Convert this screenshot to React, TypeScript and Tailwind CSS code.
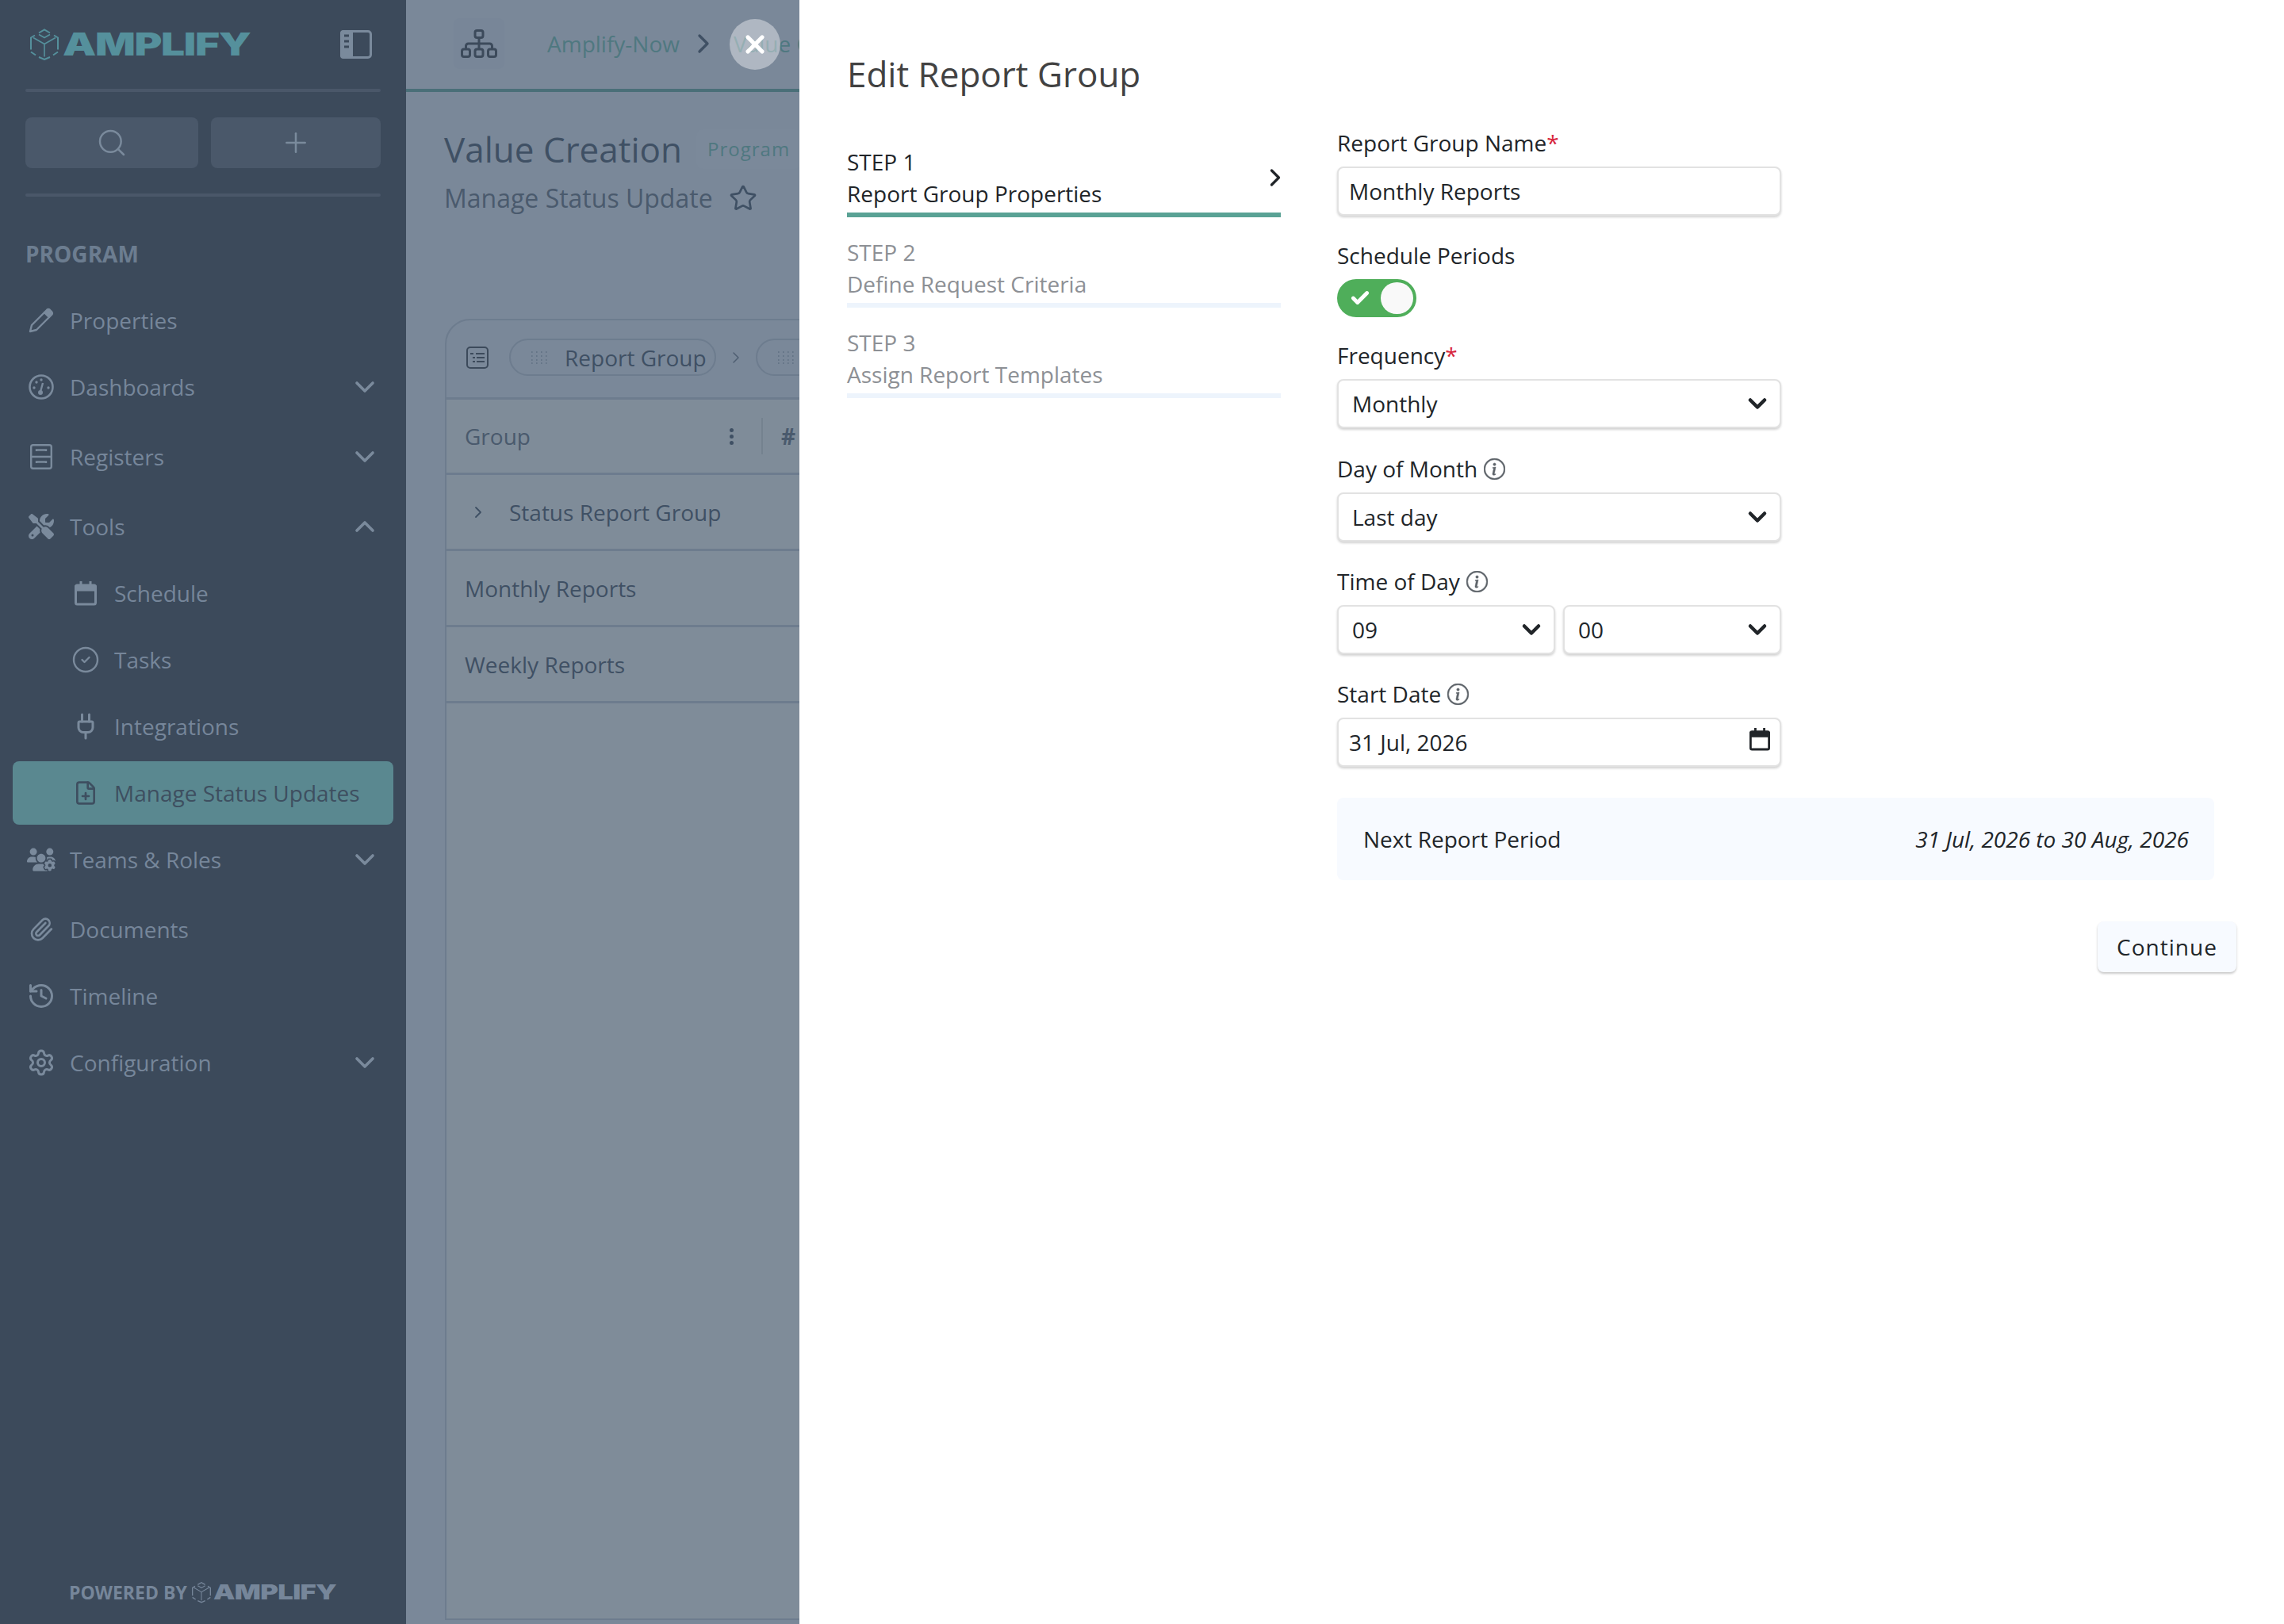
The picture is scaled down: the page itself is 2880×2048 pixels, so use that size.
import { ReactNode } from "react";
import {
  Search,
  Plus,
  ChevronDown,
  ChevronUp,
  ChevronRight,
  CircleCheck,
  Plug,
  FilePlus,
  Paperclip,
  History,
  Settings,
  Star,
  X,
  Check,
} from "lucide-react";
import { FaScrewdriverWrench, FaUsersGear } from "react-icons/fa6";
import { BsInfoCircle } from "react-icons/bs";

function Cube({ className }: { className: string }) {
  return (
    <svg viewBox="0 0 36 40" fill="none" stroke="currentColor" strokeWidth="2" className={className}>
      <path d="M11 5.500 18 1.500l7 4M30 8.500l5 3v15M1 26.500v-15l5-3M1 29.500l6 4M29 33.500l6-4M11 36l7 3 7-3" />
      <path d="M4 11.500l14 8 14-8M18 19.500v16M11 7.500l7 4 7-4" strokeWidth="1.600" />
    </svg>
  );
}

function PanelIcon() {
  return (
    <svg viewBox="0 0 40 36" className="w-10 h-9">
      <rect x="1.500" y="1.500" width="37" height="33" rx="3.500" fill="none" stroke="#7a8a9c" strokeWidth="3" />
      <path d="M4 0h12v36H4a4 4 0 0 1-4-4V4a4 4 0 0 1 4-4z" fill="#7a8a9c" />
      <path d="M5 7h6M5 14h6M5 21h6" stroke="#3c4a5b" strokeWidth="3" />
    </svg>
  );
}

function PenIcon() {
  return (
    <svg viewBox="0 0 32 32" className="w-8 h-8" fill="none" stroke="currentColor" strokeWidth="2.400" strokeLinejoin="round">
      <path d="M2 30l2-8L20 6l6 6-16 16z" />
      <path d="M20 6l3-3a3 3 0 0 1 4 0l2 2a3 3 0 0 1 0 4l-3 3z" fill="currentColor" />
    </svg>
  );
}

function GaugeIcon() {
  return (
    <svg viewBox="0 0 32 32" className="w-8 h-8" fill="none" stroke="currentColor">
      <circle cx="16" cy="16" r="14.500" strokeWidth="2.600" />
      <path d="M15 22l3-11" strokeWidth="2.400" />
      <circle cx="15" cy="23" r="3" fill="currentColor" stroke="none" />
      <circle cx="7" cy="17" r="1.700" fill="currentColor" stroke="none" />
      <circle cx="10" cy="10" r="1.700" fill="currentColor" stroke="none" />
      <circle cx="16" cy="7" r="1.700" fill="currentColor" stroke="none" />
      <circle cx="25" cy="17" r="1.700" fill="currentColor" stroke="none" />
    </svg>
  );
}

function CabinetIcon() {
  return (
    <svg viewBox="0 0 28 32" className="w-7 h-8" fill="none" stroke="currentColor" strokeWidth="2.400">
      <rect x="1.200" y="1.200" width="25.600" height="29.600" rx="2.500" />
      <path d="M1 16h26M8 9V7.500h12V9M8 24v-1.500h12V24" />
    </svg>
  );
}

function CalendarIcon({ className }: { className: string }) {
  return (
    <svg viewBox="0 0 28 32" className={className} fill="none" stroke="currentColor" strokeWidth="3">
      <rect x="1.500" y="6" width="25" height="24" rx="2" />
      <path d="M1 8h26v4H1z" fill="currentColor" />
      <path d="M8 1v6M20 1v6" />
    </svg>
  );
}

function SitemapIcon() {
  return (
    <svg viewBox="0 0 46 36" className="w-[46px] h-9" fill="none" stroke="#3c4a5b" strokeWidth="3">
      <rect x="18" y="1.500" width="10" height="9" rx="2.500" />
      <rect x="1.500" y="25" width="10" height="9.500" rx="2.500" />
      <rect x="18" y="25" width="10" height="9.500" rx="2.500" />
      <rect x="34.500" y="25" width="10" height="9.500" rx="2.500" />
      <path d="M23 11v14M6.500 25v-4a3 3 0 0 1 3-3h27a3 3 0 0 1 3 3v4" />
    </svg>
  );
}

function ListBoxIcon() {
  return (
    <svg viewBox="0 0 28 28" className="w-7 h-7" fill="none" stroke="#3c4a5b" strokeWidth="2">
      <rect x="1" y="1" width="26" height="26" rx="4" />
      <path d="M5 9h4M12 9h11M8 14h3M13 14h10M8 19h3M13 19h10" strokeWidth="1.800" />
    </svg>
  );
}

function DragDots() {
  return (
    <svg viewBox="0 0 22 16" className="w-[22px] h-4" fill="#647487">
      {[0, 6, 12, 18].map((x) =>
        [0, 5, 10, 14].map((y) => <rect key={`${x}-${y}`} x={x} y={y} width="1.600" height="2" />)
      )}
    </svg>
  );
}

type NavItem = {
  label: string;
  icon: ReactNode;
  chevron?: "up" | "down";
  sub?: boolean;
  active?: boolean;
  spaced?: boolean;
};

const navItems: NavItem[] = [
  { label: "Properties", icon: <PenIcon /> },
  { label: "Dashboards", icon: <GaugeIcon />, chevron: "down" },
  { label: "Registers", icon: <CabinetIcon />, chevron: "down", spaced: true },
  { label: "Tools", icon: <FaScrewdriverWrench className="w-8 h-8" />, chevron: "up", spaced: true },
  { label: "Schedule", icon: <CalendarIcon className="w-7 h-8" />, sub: true },
  { label: "Tasks", icon: <CircleCheck className="w-9 h-9" strokeWidth={1.6} />, sub: true },
  { label: "Integrations", icon: <Plug className="w-9 h-9" strokeWidth={2} />, sub: true },
  { label: "Manage Status Updates", icon: <FilePlus className="w-8 h-8" strokeWidth={2} />, sub: true, active: true },
  { label: "Teams & Roles", icon: <FaUsersGear className="w-10 h-10" />, chevron: "down" },
  { label: "Documents", icon: <Paperclip className="w-8 h-8" strokeWidth={2} />, spaced: true },
  { label: "Timeline", icon: <History className="w-9 h-9" strokeWidth={2} /> },
  { label: "Configuration", icon: <Settings className="w-9 h-9" strokeWidth={2} />, chevron: "down" },
];

function NavRow({ item }: { item: NavItem }) {
  return (
    <div className={`h-[84px] py-[2px] px-4 ${item.spaced ? "mt-1" : ""}`}>
      <div
        className={`h-20 flex items-center rounded-lg ${item.sub ? "pl-[74px]" : "pl-[18px]"} ${
          item.active ? "bg-[#5a8890] text-[#3e4f60]" : "text-[#76869a]"
        }`}
      >
        <span className={`w-9 flex items-center justify-center shrink-0 ${item.active ? "text-[#3e4f60]" : "text-[#7a8a9c]"}`}>
          {item.icon}
        </span>
        <span className="ml-[18px] text-[28px] leading-10">{item.label}</span>
        {item.chevron === "down" && <ChevronDown className="ml-auto mr-[16px] w-10 h-10 text-[#7a8a9c]" strokeWidth={2.200} />}
        {item.chevron === "up" && <ChevronUp className="ml-auto mr-[16px] w-10 h-10 text-[#7a8a9c]" strokeWidth={2.200} />}
      </div>
    </div>
  );
}

function Sidebar() {
  return (
    <aside className="w-[512px] h-full shrink-0 bg-[#3c4a5b] flex flex-col">
      <div className="h-[112px] flex items-center px-[38px]">
        <Cube className="w-[36px] h-[40px] text-[#55909c] shrink-0" />
        <span className="ml-[5px] font-['Inter',sans-serif] font-black text-[40px] leading-none tracking-[-1px] text-[#55909c] scale-x-[1.33] origin-left">
          AMPLIFY
        </span>
        <span className="ml-auto mr-[5px]">
          <PanelIcon />
        </span>
      </div>
      <div className="mx-8 h-1 rounded bg-[#4a5769]" />
      <div className="mx-8 mt-8 flex gap-4">
        <button className="w-[218px] h-16 rounded-lg bg-[#4a586a] flex items-center justify-center text-[#7a8a9c]">
          <Search className="w-10 h-10" strokeWidth={1.500} />
        </button>
        <button className="w-[214px] h-16 rounded-lg bg-[#4a586a] flex items-center justify-center text-[#7a8a9c]">
          <Plus className="w-10 h-10" strokeWidth={1.500} />
        </button>
      </div>
      <div className="mx-8 mt-8 h-1 rounded bg-[#4a5769]" />
      <div className="mx-8 mt-[52px] h-10 flex items-center font-bold text-[28px] text-[#6c7d90]">PROGRAM</div>
      <nav className="mt-[22px]">
        {navItems.map((item) => (
          <NavRow key={item.label} item={item} />
        ))}
      </nav>
      <div className="mt-auto mb-[24px] ml-[87px] flex items-center text-[#76869a]">
        <span className="font-bold text-[23px] leading-8 w-[155px] whitespace-nowrap">POWERED BY</span>
        <Cube className="w-[24px] h-[28px]" />
        <span className="ml-[3px] font-['Inter',sans-serif] font-black text-[26px] leading-none tracking-[-0.5px] scale-x-[1.33] origin-left">
          AMPLIFY
        </span>
      </div>
    </aside>
  );
}

function Rows() {
  return (
    <>
      <div className="h-[96px] flex items-center border-b-[3px] border-[#6d7c8e] pl-[29px]">
        <ChevronRight className="w-6 h-6 -ml-[1px] text-[#3f5064]" strokeWidth={1.800} />
        <span className="ml-[27px] text-[28px] text-[#3f5064]">Status Report Group</span>
      </div>
      <div className="h-[96px] flex items-center border-b-[3px] border-[#6d7c8e] pl-[23px] text-[28px] text-[#3f5064]">Monthly Reports</div>
      <div className="h-[96px] flex items-center border-b-[3px] border-[#6d7c8e] pl-[23px] text-[28px] text-[#3f5064]">Weekly Reports</div>
    </>
  );
}

function MainBehind() {
  return (
    <main className="flex-1 min-w-0 h-full bg-[#7a8899] flex flex-col">
      <header className="h-[116px] shrink-0 border-b-4 border-[#4a6f78] flex items-center pb-[2px]">
        <div className="ml-[60px] w-16 h-16 flex items-center justify-center rounded-lg bg-[#788698]">
          <SitemapIcon />
        </div>
        <span className="ml-[54px] text-[28px] text-[#4f7880]">Amplify-Now</span>
        <ChevronRight className="ml-[10px] w-10 h-10 text-[#3f5064]" strokeWidth={2} />
        <span className="ml-[18px] text-[28px] text-[#4f7880]">Value Creation</span>
      </header>
      <div className="ml-[48px] mt-[46px] flex items-center h-[52px]">
        <span className="text-[44px] leading-[52px] text-[#3f5064]">Value Creation</span>
        <span className="ml-[18px] h-[50px] px-[14px] flex items-center rounded-lg bg-[#7b899a] text-[24px] tracking-[1px] text-[#4f7880]">Program</span>
      </div>
      <div className="ml-[48px] mt-[16px] flex items-center h-10">
        <span className="text-[32px] leading-10 text-[#4a5a6d]">Manage Status Update</span>
        <Star className="ml-[20px] w-9 h-9 text-[#3f5064]" strokeWidth={1.800} />
      </div>
      <section className="ml-[49px] mr-8 mt-[132px] mb-[5px] flex-1 rounded-t-[32px] border-2 border-[#6d7c8e] flex flex-col">
        <div className="h-[100px] shrink-0 flex items-center pl-[25px] border-b-[3px] border-[#6d7c8e] pb-[4px]">
          <ListBoxIcon />
          <div className="ml-[26px] w-[261px] h-[47px] rounded-full border-2 border-[#6d7c8e] flex items-center pl-[26px]">
            <DragDots />
            <span className="ml-[20px] text-[28px] text-[#3f5064]">Report Group</span>
          </div>
          <ChevronRight className="ml-[13px] w-6 h-6 text-[#4f5f72]" strokeWidth={1.500} />
          <div className="ml-[13px] w-[261px] h-[47px] rounded-full border-2 border-[#6d7c8e] flex items-center pl-[26px]">
            <DragDots />
          </div>
        </div>
        <div className="flex-1 bg-[#7f8c99] flex flex-col">
          <div className="h-[95px] flex items-center border-b-[3px] border-[#6d7c8e] pl-[23px] text-[28px] text-[#4a5a6d]">
            <span className="w-[334px]">Group</span>
            <span className="flex flex-col gap-[3px] w-[40px]">
              <i className="w-[5px] h-[5px] rounded-full bg-[#3f5064]" />
              <i className="w-[5px] h-[5px] rounded-full bg-[#3f5064]" />
              <i className="w-[5px] h-[5px] rounded-full bg-[#3f5064]" />
            </span>
            <span className="w-[2px] h-[46px] bg-[#74828f]" />
            <span className="ml-[23px] font-bold">#</span>
          </div>
          <Rows />
        </div>
      </section>
    </main>
  );
}

function Step({ step, name, active }: { step: string; name: string; active?: boolean }) {
  return (
    <div className={`relative h-[114px] pt-[24px] border-b-[6px] ${active ? "border-[#5aa295] text-[#212529]" : "border-[#edf4fc] text-[#8d9095]"}`}>
      <div className="text-[28px] leading-10">{step}</div>
      <div className="text-[28px] leading-10">{name}</div>
      {active && <ChevronRight className="absolute right-[-11px] top-[46px] w-9 h-9 text-[#212529]" strokeWidth={2.200} />}
    </div>
  );
}

function FieldLabel({ children, required, info }: { children: ReactNode; required?: boolean; info?: boolean }) {
  return (
    <div className="h-8 mb-[14px] flex items-center text-[28px] leading-8 text-[#212529]">
      {children}
      {required && <span className="text-[#d7263d]">*</span>}
      {info && <BsInfoCircle className="ml-[8px] w-[27px] h-[27px] text-[#5c6268]" stroke="currentColor" strokeWidth={0.3} />}
    </div>
  );
}

function Box({ value, small, select, date }: { value: string; small?: boolean; select?: boolean; date?: boolean }) {
  return (
    <div
      className={`h-[62px] rounded-lg border-2 border-[#e2e2e2] bg-white shadow-[0_2px_3px_rgba(0,0,0,0.18)] flex items-center text-[28px] text-[#212529] ${
        small ? "w-[275px]" : "w-[560px]"
      } ${select ? "pl-[17px] pr-[10px]" : "pl-[13px] pr-[11px]"}`}
    >
      <span>{value}</span>
      {select && <ChevronDown className="ml-auto w-9 h-9" strokeWidth={3} />}
      {date && <CalendarIcon className="ml-auto mr-[1px] -mt-[8px] w-[26px] h-[30px]" />}
    </div>
  );
}

function EditDrawer() {
  return (
    <div className="absolute left-[1008px] right-0 inset-y-0 bg-white pl-[60px] text-[#212529]">
      <h2 className="mt-[63px] h-[60px] text-[44px] leading-[60px] text-[#424242]">Edit Report Group</h2>
      <div className="mt-[37px] flex">
        <div className="w-[547px] shrink-0">
          <Step step="STEP 1" name="Report Group Properties" active />
          <Step step="STEP 2" name="Define Request Criteria" />
          <Step step="STEP 3" name="Assign Report Templates" />
        </div>
        <div className="ml-[71px] w-[1106px] pt-[4px]">
          <div className="mb-[34px]">
            <FieldLabel required>Report Group Name</FieldLabel>
            <Box value="Monthly Reports" />
          </div>
          <div className="mb-[32px]">
            <FieldLabel>Schedule Periods</FieldLabel>
            <div className="w-[100px] h-[48px] rounded-full bg-[#4fae5a] flex items-center pl-[16px] pr-[4px]">
              <Check className="w-[26px] h-[26px] text-white" strokeWidth={4.500} />
              <span className="ml-auto w-[41px] h-[40px] rounded-full bg-[#f9f9f9]" />
            </div>
          </div>
          <div className="mb-[35px]">
            <FieldLabel required>Frequency</FieldLabel>
            <Box value="Monthly" select />
          </div>
          <div className="mb-[34px]">
            <FieldLabel info>Day of Month</FieldLabel>
            <Box value="Last day" select />
          </div>
          <div className="mb-[34px]">
            <FieldLabel info>Time of Day</FieldLabel>
            <div className="flex gap-[10px] w-[560px]">
              <Box value="09" small select />
              <Box value="00" small select />
            </div>
          </div>
          <div className="mb-[39px]">
            <FieldLabel info>Start Date</FieldLabel>
            <Box value="31 Jul, 2026" date />
          </div>
          <div className="h-[104px] rounded-lg bg-[#f7faff] flex items-center justify-between pl-[33px] pr-[32px] text-[28px]">
            <span>Next Report Period</span>
            <span className="italic">31 Jul, 2026 to 30 Aug, 2026</span>
          </div>
          <div className="mt-[52px] -mr-[28px] flex justify-end">
            <button className="w-[175px] h-16 rounded-lg bg-[#f7faff] shadow-[0_2px_3px_rgba(0,0,0,0.22)] text-[28px] tracking-[1px] text-[#212529]">
              Continue
            </button>
          </div>
        </div>
      </div>
    </div>
  );
}

export default function App() {
  return (
    <div className="relative w-[2880px] h-[2048px] overflow-hidden flex font-['Open_Sans',sans-serif]">
      <Sidebar />
      <MainBehind />
      <EditDrawer />
      {/* close button sits half over the breadcrumb */}
      <button className="absolute left-[920px] top-6 w-16 h-16 rounded-full bg-white/40 flex items-center justify-center text-white">
        <X className="w-9 h-9" strokeWidth={3.500} />
      </button>
    </div>
  );
}
